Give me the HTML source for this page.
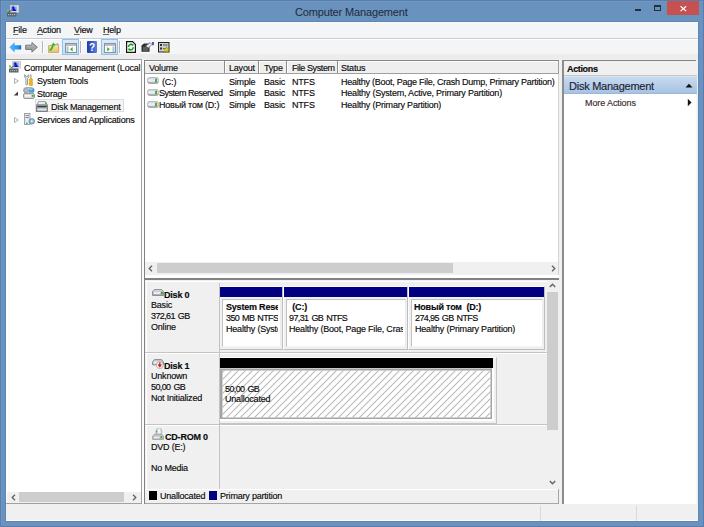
<!DOCTYPE html>
<html><head><meta charset="utf-8">
<style>
*{margin:0;padding:0;box-sizing:border-box}
html,body{width:704px;height:527px;overflow:hidden}
body{position:relative;background:#6992bf;font-family:"Liberation Sans",sans-serif;font-size:9px;letter-spacing:-0.2px;color:#0a0a0a;line-height:1}
.a{position:absolute}
.t{position:absolute;white-space:nowrap;line-height:10px;-webkit-text-stroke:0.15px currentColor}
.b{font-weight:bold}
u{text-decoration-color:#6a6a6a;text-underline-offset:1px}
.n{letter-spacing:-0.6px;word-spacing:1px}
</style></head><body>
<!-- frame -->
<div class="a" style="left:0;top:0;width:704px;height:527px;border:1px solid #5a7dab"></div>
<div class="a" style="left:1px;top:1px;width:702px;height:525px;border:1px solid #6f98c6;border-right:none;border-bottom:none"></div>
<!-- title icon -->
<svg class="a" style="left:7px;top:5px" width="12" height="12" viewBox="0 0 12 12">
<defs><linearGradient id="scr2" x1="0" x2="1"><stop offset="0" stop-color="#2c3ee6"/><stop offset="1" stop-color="#b4ccfb"/></linearGradient></defs>
<rect x="3.5" y="0.5" width="8" height="6.6" fill="#ecebe4" stroke="#cfcab4" stroke-width="1"/>
<rect x="4.5" y="1.5" width="6" height="4.6" fill="url(#scr2)"/>
<path d="M5.2 1.5 L7 1.5 L7.4 3.2 L9.6 6.1 L5.8 6.1 L6 4 Z" fill="#0a16c8"/>
<rect x="0" y="7.6" width="9.5" height="4" rx="0.5" fill="#56606a"/>
<rect x="1" y="9.2" width="1.2" height="1" fill="#c6ccd2"/><rect x="3" y="9.2" width="1.2" height="1" fill="#c6ccd2"/><rect x="5" y="9.2" width="1.2" height="1" fill="#c6ccd2"/><rect x="7" y="9.2" width="1.2" height="1" fill="#c6ccd2"/>
<rect x="0" y="4.3" width="2" height="2" fill="#5ad04c"/>
<path d="M1.5 7.2 L4.5 5.2" stroke="#3a3a3a" stroke-width="0.8"/>
</svg>
<div class="t" style="left:295px;top:6px;font-size:11px;line-height:12px;letter-spacing:-0.15px;color:#1e2a3a;-webkit-text-stroke:0">Computer Management</div>
<!-- window buttons -->
<div class="a" style="left:635px;top:9px;width:6px;height:2px;background:#26303c"></div>
<div class="a" style="left:654px;top:5px;width:7px;height:6px;border:1px solid #26303c;border-top-width:2px"></div>
<div class="a" style="left:667px;top:1px;width:32px;height:14px;background:#c75050"></div>
<svg class="a" style="left:679px;top:5px" width="9" height="7" viewBox="0 0 9 7"><path d="M1.6 1.2 L7.2 6.1 M7.2 1.2 L1.6 6.1" stroke="#fff" stroke-width="1.2"/></svg>

<!-- client -->
<div class="a" style="left:5px;top:21px;width:694px;height:501px;border:1px solid #5e87b6"></div>
<div class="a" style="left:6px;top:22px;width:692px;height:499px;background:#f0f0f0"></div>
<!-- menubar -->
<div class="a" style="left:6px;top:22px;width:692px;height:16px;background:#f4f5f7;border-top:1px solid #fbfbfc"></div>
<div class="a" style="left:6px;top:38px;width:692px;height:1px;background:#cbcccf"></div>
<div class="a" style="left:6px;top:39px;width:692px;height:1px;background:#ffffff"></div>
<div class="t" style="left:13px;top:25px;font-size:9px"><u>F</u>ile</div>
<div class="t" style="left:37px;top:25px;font-size:9px"><u>A</u>ction</div>
<div class="t" style="left:74px;top:25px;font-size:9px"><u>V</u>iew</div>
<div class="t" style="left:103px;top:25px;font-size:9px"><u>H</u>elp</div>
<!-- toolbar -->
<div class="a" style="left:6px;top:40px;width:692px;height:14px;background:#f4f5f7"></div>
<div class="a" style="left:6px;top:54px;width:692px;height:5px;background:#ececec"></div>


<!-- toolbar icons -->
<svg class="a" style="left:9px;top:42px" width="13" height="11" viewBox="0 0 13 11">
<defs><linearGradient id="gb" x1="0" x2="1"><stop offset="0" stop-color="#5fb8f4"/><stop offset=".7" stop-color="#2a98ea"/><stop offset="1" stop-color="#0b6ad0"/></linearGradient></defs>
<path d="M0.3 5.3 L5.6 0.3 L5.6 3.2 L12.2 3.2 L12.2 7.4 L5.6 7.4 L5.6 10.4 Z" fill="url(#gb)"/>
</svg>
<svg class="a" style="left:25px;top:42px" width="13" height="11" viewBox="0 0 13 11">
<path d="M12.3 5.3 L6.9 0.6 L6.9 3.2 L0.7 3.2 L0.7 7.4 L6.9 7.4 L6.9 10.1 Z" fill="#a3a3a3" stroke="#6c6c6c" stroke-width="0.9"/><path d="M1.5 4.2 L7.6 4.2 L7.6 2.4 L10.6 5.3" fill="none" stroke="#c4c4c4" stroke-width="0.6"/>
</svg>
<div class="a" style="left:42px;top:41px;width:1px;height:12px;background:#b4b4b4"></div><div class="a" style="left:43px;top:41px;width:1px;height:12px;background:#fff"></div>
<svg class="a" style="left:48px;top:42px" width="12" height="11" viewBox="0 0 12 11">
<defs><linearGradient id="fd" x1="0" y1="0" x2="0" y2="1"><stop offset="0" stop-color="#f6e3a8"/><stop offset="1" stop-color="#e9c46e"/></linearGradient></defs>
<path d="M0.6 3.6 L3.2 3.6 L4.2 2.6 L10.6 2.6 L10.6 10.4 L0.6 10.4 Z" fill="url(#fd)" stroke="#c6a55c" stroke-width="0.9"/>
<path d="M1.8 8.6 C3.6 7.2 4.6 5.4 5 3.2" fill="none" stroke="#33b82a" stroke-width="1.9"/>
<path d="M3.2 3.4 L5.6 0.4 L7.6 3.4 Z" fill="#33b82a"/>
<circle cx="9.4" cy="2.2" r="0.9" fill="#6aaee8"/>
</svg>
<div class="a" style="left:62px;top:39px;width:17px;height:16px;border:1px solid #8fc1f2;background:linear-gradient(#d9ebfb,#c2ddf7)"></div>
<svg class="a" style="left:65px;top:43px" width="12" height="10" viewBox="0 0 12 10">
<rect x="0.5" y="0.5" width="11" height="9" fill="#fdfdfd" stroke="#8d9299"/>
<rect x="1" y="1" width="10" height="2" fill="#b9bcc1"/>
<rect x="1.5" y="3.5" width="2" height="5.5" fill="#a9c0d8"/>
<path d="M7.6 4 L5 6.2 L7.6 8.4 Z" fill="#2fb52a"/>
</svg>
<div class="a" style="left:80px;top:41px;width:1px;height:12px;background:#b4b4b4"></div><div class="a" style="left:81px;top:41px;width:1px;height:12px;background:#fff"></div>
<svg class="a" style="left:87px;top:41px" width="10" height="12" viewBox="0 0 10 12">
<defs><linearGradient id="gh" x1="0" x2="1"><stop offset="0" stop-color="#1d3aa8"/><stop offset="1" stop-color="#5a7fe0"/></linearGradient></defs>
<rect x="0" y="0" width="10" height="12" rx="1" fill="url(#gh)"/>
<text x="5" y="9.6" font-family="Liberation Sans" font-size="10" font-weight="bold" text-anchor="middle" fill="#fff">?</text>
</svg>
<div class="a" style="left:101px;top:39px;width:17px;height:16px;border:1px solid #8fc1f2;background:linear-gradient(#d9ebfb,#c2ddf7)"></div>
<svg class="a" style="left:104px;top:43px" width="12" height="10" viewBox="0 0 12 10">
<rect x="0.5" y="0.5" width="11" height="9" fill="#fdfdfd" stroke="#8d9299"/>
<rect x="1" y="1" width="10" height="2" fill="#b9bcc1"/>
<rect x="8.5" y="3.5" width="2" height="5.5" fill="#a9c0d8"/>
<path d="M3.2 4 L5.8 6.2 L3.2 8.4 Z" fill="#2fb52a"/>
</svg>
<div class="a" style="left:119px;top:41px;width:1px;height:12px;background:#b4b4b4"></div><div class="a" style="left:120px;top:41px;width:1px;height:12px;background:#fff"></div>
<svg class="a" style="left:126px;top:41px" width="10" height="12" viewBox="0 0 10 12">
<path d="M0.6 0.6 L6.6 0.6 L9.4 3.4 L9.4 11.4 L0.6 11.4 Z" fill="#fff" stroke="#151515" stroke-width="1.2"/>
<path d="M2.6 6 A2.3 2.3 0 0 1 6.3 3.9" fill="none" stroke="#1c9e26" stroke-width="1.5"/>
<path d="M5.2 2.4 L7.9 3.2 L6.6 5.6 Z" fill="#1c9e26"/>
<path d="M7.2 6.2 A2.3 2.3 0 0 1 3.5 8.3" fill="none" stroke="#1c9e26" stroke-width="1.5"/>
<path d="M4.6 9.8 L1.9 9 L3.2 6.6 Z" fill="#1c9e26"/>
</svg>
<svg class="a" style="left:141px;top:42px" width="13" height="10" viewBox="0 0 13 10">
<path d="M0.5 3.5 L3 1.5 L8.5 1.5 L8.5 9.8 L0.5 9.8 Z" fill="#2e2e2e"/>
<rect x="1.8" y="4.8" width="5.5" height="4" fill="#5e5e5e"/>
<path d="M4.5 4 L9.3 0.6 L11 2.3 L7.5 6 Z" fill="#e6e8ec" stroke="#4a4a4a" stroke-width="0.6"/>
<rect x="11.2" y="0" width="1.6" height="3.2" fill="#2438c8"/>
</svg>
<svg class="a" style="left:158px;top:42px" width="12" height="11" viewBox="0 0 12 11">
<rect x="0.5" y="0.5" width="10.5" height="9.5" fill="#cfcfcf" stroke="#222" stroke-width="1"/>
<rect x="2" y="2" width="2" height="2" fill="#333"/><rect x="5" y="2.5" width="4.5" height="1" fill="#555"/>
<rect x="2" y="5.5" width="2" height="2" fill="#333"/><rect x="5" y="6" width="3" height="1" fill="#555"/>
<path d="M8.5 4.5 L9.4 6.6 L11.6 6.7 L9.9 8.1 L10.6 10.5 L8.5 9.2 L6.4 10.5 L7.1 8.1 L5.4 6.7 L7.6 6.6 Z" fill="#e2d21a" stroke="#7a6a00" stroke-width="0.4"/>
</svg>

<!-- tree panel -->
<div class="a" style="left:6px;top:59px;width:136px;height:445px;background:#fff;border-top:1px solid #a0a0a0;border-right:1px solid #a0a0a0;border-bottom:1px solid #a0a0a0"></div>


<!-- tree content -->
<svg class="a" style="left:9px;top:61px" width="12" height="12" viewBox="0 0 12 12">
<defs><linearGradient id="scr" x1="0" x2="1"><stop offset="0" stop-color="#2c3ee6"/><stop offset="1" stop-color="#b4ccfb"/></linearGradient></defs>
<rect x="3.5" y="0.5" width="8" height="6.6" fill="#ecebe4" stroke="#cfcab4" stroke-width="1"/>
<rect x="4.5" y="1.5" width="6" height="4.6" fill="url(#scr)"/>
<path d="M5.2 1.5 L7 1.5 L7.4 3.2 L9.6 6.1 L5.8 6.1 L6 4 Z" fill="#0a16c8"/>
<rect x="0" y="7.6" width="9.5" height="4" rx="0.5" fill="#56606a"/>
<rect x="1" y="9.2" width="1.2" height="1" fill="#c6ccd2"/><rect x="3" y="9.2" width="1.2" height="1" fill="#c6ccd2"/><rect x="5" y="9.2" width="1.2" height="1" fill="#c6ccd2"/><rect x="7" y="9.2" width="1.2" height="1" fill="#c6ccd2"/>
<rect x="0" y="4.3" width="2" height="2" fill="#5ad04c"/>
<path d="M1.5 7.2 L4.5 5.2" stroke="#3a3a3a" stroke-width="0.8"/>
</svg>
<div class="t" style="left:24px;top:63px">Computer Management (Local</div>
<svg class="a" style="left:14px;top:78px" width="5" height="6" viewBox="0 0 5 6"><path d="M0.5 0.5 L4.3 3 L0.5 5.5 Z" fill="none" stroke="#a6a6a6" stroke-width="0.9"/></svg>
<svg class="a" style="left:24px;top:74px" width="9" height="12" viewBox="0 0 9 12">
<path d="M0.6 0.6 L0.6 2.6 C0.6 3.6 1.3 4.2 1.9 4.4 L1.9 10.6 C1.9 11.2 3.5 11.2 3.5 10.6 L3.5 4.4 C4.1 4.2 4.8 3.6 4.8 2.6 L4.8 0.6 L3.7 1.6 L3.7 2.6 L1.7 2.6 L1.7 1.6 Z" fill="#f4f4f4" stroke="#80858a" stroke-width="0.8"/>
<rect x="6.4" y="0.4" width="1" height="4.4" fill="#8a8a8a"/>
<path d="M5.6 4.8 L8.2 4.8 C8.8 5.6 8.8 6.6 8.2 7.4 C8.8 8.2 8.8 10.6 8.2 11.6 L5.6 11.6 C5 10.6 5 8.2 5.6 7.4 C5 6.6 5 5.6 5.6 4.8 Z" fill="#f2b418" stroke="#c98c00" stroke-width="0.5"/>
</svg>
<div class="t" style="left:37px;top:76px">System Tools</div>
<svg class="a" style="left:13px;top:91px" width="6" height="5" viewBox="0 0 6 5"><path d="M5 0.5 L5 4.5 L0.8 4.5 Z" fill="#3c3c3c"/></svg>
<svg class="a" style="left:23px;top:87px" width="12" height="12" viewBox="0 0 12 12">
<rect x="0.5" y="0.6" width="10.5" height="5.4" rx="2.6" fill="#d9dce0" stroke="#8f949a" stroke-width="0.8"/>
<circle cx="3.2" cy="3.3" r="2" fill="#b9bec4" stroke="#7d8288" stroke-width="0.5"/>
<rect x="5.6" y="1.6" width="5.6" height="3.6" rx="1.2" fill="#3d9de4"/>
<rect x="6.3" y="2.2" width="3" height="1" fill="#a9d6f6"/>
<rect x="0.5" y="6.4" width="11" height="5.1" rx="1.6" fill="#d4d7db" stroke="#7d8288" stroke-width="0.8"/>
<rect x="1.8" y="8" width="6" height="1.8" fill="#f6f6f8"/>
<rect x="8.8" y="7.9" width="1.9" height="1.9" fill="#2fb52f"/>
</svg>
<div class="t" style="left:37px;top:89px">Storage</div>
<div class="a" style="left:35px;top:99px;width:89px;height:13px;background:#f5f5f5;border:1px solid #dcdcdc"></div>
<svg class="a" style="left:36px;top:100px" width="12" height="12" viewBox="0 0 12 12">
<path d="M1 5 L2.5 1.5 L9.5 1.5 L11 5 Z" fill="#e8eaed" stroke="#8a8d92" stroke-width="0.8"/>
<rect x="0.5" y="5" width="11" height="6.5" fill="#9da2a8" stroke="#6f747a" stroke-width="0.8"/>
<rect x="1.5" y="6" width="9" height="1.2" fill="#3b3f46"/>
<rect x="1.5" y="8.5" width="9" height="2" fill="#e3e6ea"/>
<rect x="9" y="2.5" width="1.6" height="1.6" fill="#30c030"/>
</svg>
<div class="t" style="left:51px;top:102px">Disk Management</div>
<svg class="a" style="left:14px;top:117px" width="5" height="6" viewBox="0 0 5 6"><path d="M0.5 0.5 L4.3 3 L0.5 5.5 Z" fill="none" stroke="#a6a6a6" stroke-width="0.9"/></svg>
<svg class="a" style="left:24px;top:113px" width="11" height="12" viewBox="0 0 11 12">
<rect x="0.5" y="0.5" width="5.5" height="11" fill="#e8ebee" stroke="#8c9298" stroke-width="0.8"/>
<rect x="1.5" y="2" width="3.5" height="0.8" fill="#6e757c"/><rect x="1.5" y="4" width="3.5" height="0.8" fill="#6e757c"/>
<circle cx="7.8" cy="8.3" r="2.8" fill="#8fb8dc" stroke="#5f87ad" stroke-width="0.8"/>
<circle cx="7.8" cy="8.3" r="1" fill="#f0f4f8"/>
<rect x="2" y="9.5" width="1.5" height="1.5" fill="#30c030"/>
</svg>
<div class="t" style="left:37px;top:115px">Services and Applications</div>
<!-- tree h-scroll -->
<div class="a" style="left:7px;top:492px;width:134px;height:11px;background:#f0f0f0"></div>
<div class="a" style="left:19px;top:492px;width:105px;height:10px;background:#cdcdcd"></div>
<svg class="a" style="left:11px;top:494px" width="5" height="7" viewBox="0 0 5 7"><path d="M4 0.8 L1.2 3.5 L4 6.2" fill="none" stroke="#606060" stroke-width="1.3"/></svg>
<svg class="a" style="left:132px;top:494px" width="5" height="7" viewBox="0 0 5 7"><path d="M1 0.8 L3.8 3.5 L1 6.2" fill="none" stroke="#606060" stroke-width="1.3"/></svg>

<!-- list panel -->
<div class="a" style="left:144px;top:60px;width:415px;height:219px;background:#fff;border-top:1px solid #828282;border-left:1px solid #828282"></div>


<!-- list content -->
<div class="a" style="left:145px;top:61px;width:414px;height:12px;background:#efefef;border-top:1px solid #fff"></div>
<div class="a" style="left:145px;top:73px;width:414px;height:1px;background:#a0a0a0"></div>
<div class="a" style="left:224px;top:61px;width:1px;height:12px;background:#8c8c8c"></div><div class="a" style="left:225px;top:61px;width:1px;height:12px;background:#fff"></div>
<div class="a" style="left:258px;top:61px;width:1px;height:12px;background:#8c8c8c"></div><div class="a" style="left:259px;top:61px;width:1px;height:12px;background:#fff"></div>
<div class="a" style="left:286px;top:61px;width:1px;height:12px;background:#8c8c8c"></div><div class="a" style="left:287px;top:61px;width:1px;height:12px;background:#fff"></div>
<div class="a" style="left:337px;top:61px;width:1px;height:12px;background:#8c8c8c"></div><div class="a" style="left:338px;top:61px;width:1px;height:12px;background:#fff"></div>
<div class="a" style="left:558px;top:61px;width:1px;height:13px;background:#a0a0a0"></div>
<div class="t" style="left:149px;top:63px">Volume</div>
<div class="t" style="left:229px;top:63px">Layout</div>
<div class="t" style="left:264px;top:63px">Type</div>
<div class="t" style="left:292px;top:63px;letter-spacing:-0.4px">File System</div>
<div class="t" style="left:341px;top:63px">Status</div>
<svg class="a" style="left:147px;top:77px" width="12" height="7" viewBox="0 0 12 7"><defs><linearGradient id="dg77" x1="0" y1="0" x2="0" y2="1"><stop offset="0" stop-color="#c9cbce"/><stop offset=".5" stop-color="#e9e9ee"/><stop offset="1" stop-color="#8f9296"/></linearGradient></defs><rect x="0.3" y="0.3" width="11.4" height="6.4" rx="3" fill="url(#dg77)" stroke="#9a9da2" stroke-width="0.6"/><rect x="2" y="2.3" width="5.5" height="2.4" fill="#ececf6"/><rect x="8.2" y="1.8" width="1.7" height="3.4" fill="#1fae1f"/></svg><svg class="a" style="left:147px;top:89px" width="12" height="7" viewBox="0 0 12 7"><defs><linearGradient id="dg89" x1="0" y1="0" x2="0" y2="1"><stop offset="0" stop-color="#c9cbce"/><stop offset=".5" stop-color="#e9e9ee"/><stop offset="1" stop-color="#8f9296"/></linearGradient></defs><rect x="0.3" y="0.3" width="11.4" height="6.4" rx="3" fill="url(#dg89)" stroke="#9a9da2" stroke-width="0.6"/><rect x="2" y="2.3" width="5.5" height="2.4" fill="#ececf6"/><rect x="8.2" y="1.8" width="1.7" height="3.4" fill="#1fae1f"/></svg><svg class="a" style="left:147px;top:101px" width="12" height="7" viewBox="0 0 12 7"><defs><linearGradient id="dg101" x1="0" y1="0" x2="0" y2="1"><stop offset="0" stop-color="#c9cbce"/><stop offset=".5" stop-color="#e9e9ee"/><stop offset="1" stop-color="#8f9296"/></linearGradient></defs><rect x="0.3" y="0.3" width="11.4" height="6.4" rx="3" fill="url(#dg101)" stroke="#9a9da2" stroke-width="0.6"/><rect x="2" y="2.3" width="5.5" height="2.4" fill="#ececf6"/><rect x="8.2" y="1.8" width="1.7" height="3.4" fill="#1fae1f"/></svg>
<div class="t" style="left:162px;top:77px">(C:)</div>
<div class="t" style="left:159px;top:88px;letter-spacing:-0.5px">System Reserved</div>
<div class="t" style="left:159px;top:100px">Новый том (D:)</div>
<div class="t" style="left:229px;top:77px">Simple</div>
<div class="t" style="left:229px;top:88px">Simple</div>
<div class="t" style="left:229px;top:100px">Simple</div>
<div class="t" style="left:264px;top:77px">Basic</div>
<div class="t" style="left:264px;top:88px">Basic</div>
<div class="t" style="left:264px;top:100px">Basic</div>
<div class="t" style="left:292px;top:77px">NTFS</div>
<div class="t" style="left:292px;top:88px">NTFS</div>
<div class="t" style="left:292px;top:100px">NTFS</div>
<div class="t" style="left:341px;top:77px;letter-spacing:-0.25px">Healthy (Boot, Page File, Crash Dump, Primary Partition)</div>
<div class="t" style="left:341px;top:88px">Healthy (System, Active, Primary Partition)</div>
<div class="t" style="left:341px;top:100px">Healthy (Primary Partition)</div>
<!-- list h-scroll -->
<div class="a" style="left:145px;top:262px;width:413px;height:13px;background:#f0f0f0"></div>
<div class="a" style="left:558px;top:74px;width:1px;height:205px;background:#d4d4d4"></div>
<div class="a" style="left:157px;top:263px;width:296px;height:10px;background:#cdcdcd"></div>
<svg class="a" style="left:148px;top:265px" width="5" height="7" viewBox="0 0 5 7"><path d="M4 0.8 L1.2 3.5 L4 6.2" fill="none" stroke="#606060" stroke-width="1.3"/></svg>
<svg class="a" style="left:551px;top:265px" width="5" height="7" viewBox="0 0 5 7"><path d="M1 0.8 L3.8 3.5 L1 6.2" fill="none" stroke="#606060" stroke-width="1.3"/></svg>
<div class="a" style="left:145px;top:275px;width:414px;height:3px;background:#fff"></div>
<div class="a" style="left:144px;top:278px;width:415px;height:2px;background:#838383"></div>

<!-- disk panel -->
<div class="a" style="left:144px;top:279px;width:415px;height:225px;background:#f0f0f0;border-left:1px solid #828282;border-top:1px solid #828282"></div>


<!-- disk content -->
<div class="a" style="left:145px;top:280px;width:402px;height:209px;background:#f0f0f0"></div>
<div class="a" style="left:145px;top:281px;width:402px;height:1px;background:#fff"></div>
<div class="a" style="left:146px;top:281px;width:1px;height:208px;background:#fff"></div>
<div class="a" style="left:145px;top:352px;width:402px;height:1px;background:#c4c4c4"></div>
<div class="a" style="left:145px;top:353px;width:402px;height:1px;background:#fff"></div>
<div class="a" style="left:145px;top:424px;width:402px;height:1px;background:#c4c4c4"></div>
<div class="a" style="left:145px;top:425px;width:402px;height:1px;background:#fff"></div>
<!-- disk 0 -->
<svg class="a" style="left:152px;top:289px" width="12" height="7" viewBox="0 0 12 7">
<defs><linearGradient id="dk0" x1="0" y1="0" x2="0" y2="1"><stop offset="0" stop-color="#d6d8dc"/><stop offset="1" stop-color="#9ea2a8"/></linearGradient></defs>
<path d="M0.5 2.6 L2.4 0.5 L9.6 0.5 L11.5 2.6 L11.5 6.5 L0.5 6.5 Z" fill="url(#dk0)" stroke="#7e8288" stroke-width="0.8"/>
<rect x="1.8" y="2.8" width="6.8" height="2.3" fill="#ececf4"/>
<rect x="8.9" y="2.9" width="1.8" height="2.2" fill="#1fae1f"/>
</svg>
<div class="t b" style="left:164px;top:290px">Disk 0</div>
<div class="t" style="left:151px;top:300px">Basic</div>
<div class="t n" style="left:151px;top:311px">372,61 GB</div>
<div class="t" style="left:151px;top:322px">Online</div>
<div class="a" style="left:219px;top:286px;width:64px;height:64px;background:#f0f0f0;border-left:1px solid #fff;border-top:1px solid #fff;border-right:1px solid #bdbdbd;border-bottom:1px solid #bdbdbd"></div>
<div class="a" style="left:220px;top:287px;width:62px;height:10px;background:#000080"></div>
<div class="a" style="left:222px;top:299px;width:59px;height:48px;background:#fff;border:1px solid #c2c2c2;border-right-color:#ececec;border-bottom-color:#f4f4f4;overflow:hidden"><div class="a" style="left:0;top:0;width:55px;height:46px;overflow:hidden">
<div class="t b" style="left:3px;top:2px">System Rese</div>
<div class="t n" style="left:3px;top:13px">350 MB NTFS</div>
<div class="t" style="left:3px;top:24px">Healthy (Syste</div>
</div></div>
<div class="a" style="left:283px;top:286px;width:125px;height:64px;background:#f0f0f0;border-left:1px solid #fff;border-top:1px solid #fff;border-right:1px solid #bdbdbd;border-bottom:1px solid #bdbdbd"></div>
<div class="a" style="left:284px;top:287px;width:123px;height:10px;background:#000080"></div>
<div class="a" style="left:286px;top:299px;width:120px;height:48px;background:#fff;border:1px solid #c2c2c2;border-right-color:#ececec;border-bottom-color:#f4f4f4;overflow:hidden"><div class="a" style="left:0;top:0;width:116px;height:46px;overflow:hidden">
<div class="t b" style="left:3px;top:2px">&nbsp;(C:)</div>
<div class="t n" style="left:2px;top:13px">97,31 GB NTFS</div>
<div class="t" style="left:2px;top:24px">Healthy (Boot, Page File, Crash</div>
</div></div>
<div class="a" style="left:408px;top:286px;width:137px;height:64px;background:#f0f0f0;border-left:1px solid #fff;border-top:1px solid #fff;border-right:1px solid #bdbdbd;border-bottom:1px solid #bdbdbd"></div>
<div class="a" style="left:409px;top:287px;width:135px;height:10px;background:#000080"></div>
<div class="a" style="left:411px;top:299px;width:132px;height:48px;background:#fff;border:1px solid #c2c2c2;border-right-color:#ececec;border-bottom-color:#f4f4f4;overflow:hidden"><div class="a" style="left:0;top:0;width:128px;height:46px;overflow:hidden">
<div class="t b" style="left:2px;top:2px">Новый том&nbsp; (D:)</div>
<div class="t n" style="left:3px;top:13px">274,95 GB NTFS</div>
<div class="t" style="left:3px;top:24px">Healthy (Primary Partition)</div>
</div></div>

<div class="a" style="left:219px;top:283px;width:1px;height:206px;background:#c4c4c4"></div>
<!-- disk 1 -->
<svg class="a" style="left:152px;top:359px" width="12" height="10" viewBox="0 0 12 10">
<path d="M0.6 2.8 L2.4 0.6 L9.6 0.6 L11.4 2.8 L11.4 5.8 L0.6 5.8 Z" fill="#c9ccd1" stroke="#7e8288" stroke-width="0.9"/>
<rect x="1.8" y="2.6" width="4" height="1.8" fill="#f2f2f6"/>
<circle cx="7.8" cy="6.2" r="3.4" fill="#fafafa" stroke="#9ca1a7" stroke-width="0.8"/>
<path d="M7.1 3.6 L8.5 3.6 L8.5 5.6 L10.1 5.6 L7.8 8.8 L5.5 5.6 L7.1 5.6 Z" fill="#d81818"/>
</svg>
<div class="t b" style="left:164px;top:361px">Disk 1</div>
<div class="t" style="left:151px;top:371px">Unknown</div>
<div class="t n" style="left:151px;top:382px">50,00 GB</div>
<div class="t" style="left:151px;top:393px">Not Initialized</div>
<div class="a" style="left:220px;top:357px;width:277px;height:67px;background:#f0f0f0;border-top:1px solid #fff;border-right:1px solid #c4c4c4;border-bottom:1px solid #c4c4c4"></div>
<div class="a" style="left:220px;top:358px;width:273px;height:10px;background:#000"></div>
<svg class="a" style="left:220px;top:368px" width="274" height="53" viewBox="0 0 274 53">
<defs><pattern id="hp" width="7" height="7" patternUnits="userSpaceOnUse"><path d="M-1 8 L8 -1 M-1 1 L1 -1 M6 8 L8 6" stroke="#b9b9b9" stroke-width="1.1"/></pattern></defs>
<rect x="0" y="0" width="273" height="52" fill="#a4a4a4"/>
<rect x="0" y="0" width="273" height="1" fill="#c8c8c8"/>
<rect x="0" y="51" width="273" height="2" fill="#fff"/>
<rect x="272" y="0" width="2" height="53" fill="#fff"/>
<rect x="2.5" y="2.5" width="268" height="47" fill="#fff"/>
<rect x="2.5" y="2.5" width="268" height="47" fill="url(#hp)"/>
</svg>
<div class="t n" style="left:225px;top:384px">50,00 GB</div>
<div class="t" style="left:225px;top:394px">Unallocated</div>
<!-- cd-rom -->
<svg class="a" style="left:152px;top:428px" width="12" height="12" viewBox="0 0 12 12">
<ellipse cx="7" cy="4" rx="3" ry="3.8" fill="#e4e0ec" stroke="#a9a4b6" stroke-width="0.7"/>
<rect x="6.2" y="0.5" width="1.6" height="7" fill="#f8f8f8"/>
<rect x="3.8" y="2.5" width="1.5" height="2" fill="#44c044"/>
<path d="M0.6 8 L2.5 6.2 L9.5 6.2 L11.4 8 L11.4 11.4 L0.6 11.4 Z" fill="#c2c5ca" stroke="#8a8e94" stroke-width="0.7"/>
<rect x="1.8" y="8.8" width="5.5" height="1.3" fill="#f4f4f4"/>
<rect x="8.5" y="8.3" width="1.8" height="2" fill="#2fb02f"/>
</svg>
<div class="t b" style="left:165px;top:432px">CD-ROM 0</div>
<div class="t" style="left:151px;top:442px">DVD (E:)</div>
<div class="t" style="left:151px;top:463px">No Media</div>
<!-- legend -->
<div class="a" style="left:145px;top:489px;width:414px;height:14px;background:#f0f0f0;border-top:1px solid #fff"></div>
<div class="a" style="left:149px;top:491px;width:8px;height:9px;background:#000"></div>
<div class="t" style="left:160px;top:491px">Unallocated</div>
<div class="a" style="left:209px;top:491px;width:8px;height:9px;background:#000080"></div>
<div class="t" style="left:220px;top:491px">Primary partition</div>
<div class="a" style="left:145px;top:503px;width:414px;height:1px;background:#a6a6a6"></div>
<div class="a" style="left:558px;top:489px;width:1px;height:15px;background:#a6a6a6"></div>
<!-- v-scroll -->
<div class="a" style="left:547px;top:280px;width:12px;height:209px;background:#f0f0f0"></div>
<div class="a" style="left:547px;top:292px;width:11px;height:138px;background:#cdcdcd"></div>
<svg class="a" style="left:549px;top:283px" width="7" height="5" viewBox="0 0 7 5"><path d="M0.8 4 L3.5 1.2 L6.2 4" fill="none" stroke="#606060" stroke-width="1.3"/></svg>
<svg class="a" style="left:549px;top:480px" width="7" height="5" viewBox="0 0 7 5"><path d="M0.8 1 L3.5 3.8 L6.2 1" fill="none" stroke="#606060" stroke-width="1.3"/></svg>

<!-- actions panel -->
<div class="a" style="left:562px;top:60px;width:135px;height:444px;background:#fff;border-left:2px solid #8c8c8c;border-top:1px solid #828282"></div>
<div class="a" style="left:696px;top:60px;width:1px;height:444px;background:#f4f5f7"></div>
<div class="a" style="left:142px;top:60px;width:2px;height:444px;background:#fcfcfc"></div>


<!-- actions content -->
<div class="a" style="left:564px;top:61px;width:133px;height:15px;background:#f0f0f0;border-bottom:1px solid #c8c8c8"></div>
<div class="t b" style="left:567px;top:64px;letter-spacing:-0.35px">Actions</div>
<div class="a" style="left:564px;top:76px;width:133px;height:18px;background:linear-gradient(#c8dbef,#a7c3e3);border-top:1px solid #d8e6f4;border-bottom:1px solid #9bb7d8"></div>
<div class="t" style="left:569px;top:81px;font-size:11px;color:#1b2433;letter-spacing:-0.25px">Disk Management</div>
<svg class="a" style="left:685px;top:83px" width="8" height="5" viewBox="0 0 8 5"><path d="M0.5 4.5 L4 0.8 L7.5 4.5 Z" fill="#111"/></svg>
<div class="t" style="left:585px;top:98px;color:#3a2c2c;letter-spacing:-0.1px">More Actions</div>
<svg class="a" style="left:687px;top:98px" width="5" height="9" viewBox="0 0 5 9"><path d="M0.8 0.8 L4.5 4.5 L0.8 8.2 Z" fill="#111"/></svg>

<!-- status bar -->
<div class="a" style="left:6px;top:505px;width:691px;height:16px;background:#f0f0f0;border-bottom:1px solid #fafafa"></div>
<div class="a" style="left:540px;top:506px;width:1px;height:15px;background:#d8d8d8"></div>
<div class="a" style="left:636px;top:506px;width:1px;height:15px;background:#d8d8d8"></div>
</body></html>
